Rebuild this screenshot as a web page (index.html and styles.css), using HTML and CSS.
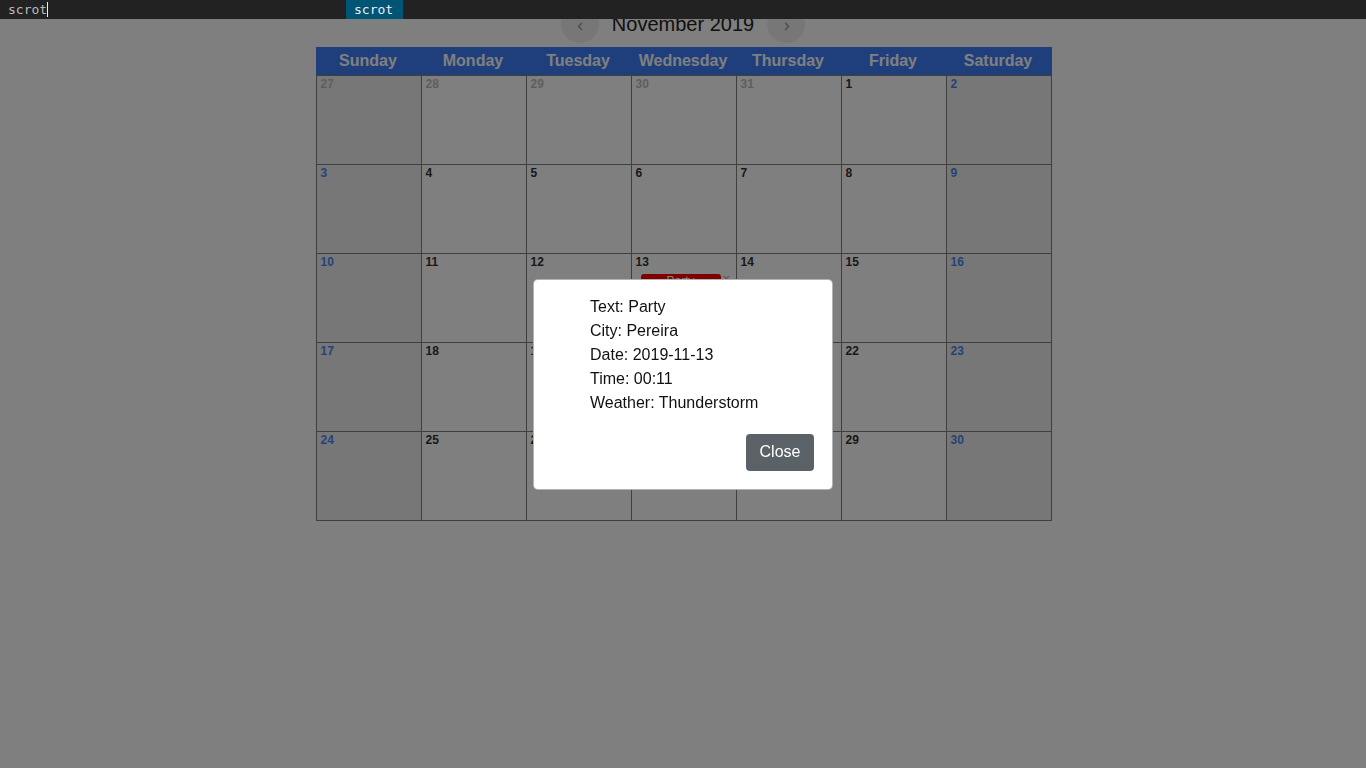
FILE: index.html
```html
<!DOCTYPE html>
<html>
<head>
<meta charset="utf-8">
<link rel="stylesheet" href="styles.css">
</head>
<body>
<div class="page">
  <div class="nav">
    <button class="nav-btn">&lsaquo;</button>
    <div class="title">November 2019</div>
    <button class="nav-btn">&rsaquo;</button>
  </div>
  <div class="calendar">
    <div class="weekdays">
      <div>Sunday</div><div>Monday</div><div>Tuesday</div><div>Wednesday</div><div>Thursday</div><div>Friday</div><div>Saturday</div>
    </div>
    <div class="days">
      <div class="day weekend other"><span class="num">27</span></div>
      <div class="day other"><span class="num">28</span></div>
      <div class="day other"><span class="num">29</span></div>
      <div class="day other"><span class="num">30</span></div>
      <div class="day other"><span class="num">31</span></div>
      <div class="day"><span class="num">1</span></div>
      <div class="day weekend"><span class="num">2</span></div>

      <div class="day weekend"><span class="num">3</span></div>
      <div class="day"><span class="num">4</span></div>
      <div class="day"><span class="num">5</span></div>
      <div class="day"><span class="num">6</span></div>
      <div class="day"><span class="num">7</span></div>
      <div class="day"><span class="num">8</span></div>
      <div class="day weekend"><span class="num">9</span></div>

      <div class="day weekend"><span class="num">10</span></div>
      <div class="day"><span class="num">11</span></div>
      <div class="day"><span class="num">12</span></div>
      <div class="day"><span class="num">13</span>
        <div class="event"><span class="event-label">Party</span><span class="event-x">&times;</span></div>
      </div>
      <div class="day"><span class="num">14</span></div>
      <div class="day"><span class="num">15</span></div>
      <div class="day weekend"><span class="num">16</span></div>

      <div class="day weekend"><span class="num">17</span></div>
      <div class="day"><span class="num">18</span></div>
      <div class="day"><span class="num">19</span></div>
      <div class="day"><span class="num">20</span></div>
      <div class="day"><span class="num">21</span></div>
      <div class="day"><span class="num">22</span></div>
      <div class="day weekend"><span class="num">23</span></div>

      <div class="day weekend"><span class="num">24</span></div>
      <div class="day"><span class="num">25</span></div>
      <div class="day"><span class="num">26</span></div>
      <div class="day"><span class="num">27</span></div>
      <div class="day"><span class="num">28</span></div>
      <div class="day"><span class="num">29</span></div>
      <div class="day weekend"><span class="num">30</span></div>
    </div>
  </div>
</div>

<div class="backdrop"></div>

<div class="modal">
  <div class="modal-body">
    <ul class="details">
      <li>Text: Party</li>
      <li>City: Pereira</li>
      <li>Date: 2019-11-13</li>
      <li>Time: 00:11</li>
      <li>Weather: Thunderstorm</li>
    </ul>
  </div>
  <div class="modal-footer">
    <button class="btn-close">Close</button>
  </div>
</div>

<div class="dmenu">
  <span class="prompt">scrot<span class="cursor"></span></span>
  <span class="item-sel">scrot</span>
</div>
</body>
</html>
```

FILE: styles.css
```css
html, body {
  margin: 0;
  padding: 0;
  background: #fff;
  font-family: "Liberation Sans", Arial, sans-serif;
  color: #212529;
}

.page {
  display: flex;
  flex-direction: column;
  align-items: center;
}

.nav {
  display: flex;
  align-items: center;
  justify-content: center;
  gap: 13px;
  padding-top: 5px;
  height: 38px;
  margin-bottom: 4px;
}

.nav-btn {
  width: 38px;
  height: 38px;
  border-radius: 50%;
  border: none;
  background: #eeeeee;
  color: #999;
  font-size: 18px;
  font-family: "Liberation Sans", Arial, sans-serif;
  padding: 2px 0 0 1px;
  display: flex;
  align-items: center;
  justify-content: center;
}

.title {
  font-size: 20px;
  line-height: 24px;
  color: #222;
  white-space: nowrap;
}

.calendar {
  width: 736px;
  margin-left: 1px;
}

.weekdays {
  display: grid;
  grid-template-columns: repeat(7, 105px);
  background: #3f7ef8;
  height: 28px;
  align-items: center;
}

.weekdays div {
  text-align: center;
  color: #fff;
  font-weight: bold;
  font-size: 16px;
  padding-bottom: 1px;
}

.days {
  display: grid;
  grid-template-columns: repeat(7, 105px);
  grid-auto-rows: 89px;
  border-left: 1px solid #7f7f7f;
  border-top: 1px solid #7f7f7f;
}

.day {
  border-right: 1px solid #7f7f7f;
  border-bottom: 1px solid #7f7f7f;
  padding: 1px 4px;
  background: #fff;
  display: flex;
  flex-direction: column;
  align-items: flex-start;
}

.day.weekend {
  background: #eeeeee;
}

.num {
  font-size: 12px;
  font-weight: bold;
  line-height: 14px;
  color: #333;
}

.weekend .num {
  color: #4a86f0;
}

.other .num,
.weekend.other .num {
  color: #bdbdbd;
}

.event {
  display: flex;
  align-items: flex-start;
  margin-top: 5px;
  margin-left: 5px;
}

.event-label {
  width: 80px;
  height: 15px;
  background: #ff0000;
  color: #fff;
  border-radius: 3px;
  font-size: 12px;
  text-align: center;
  line-height: 15px;
}

.event-x {
  color: #aaa;
  font-size: 13px;
  margin-left: 2px;
  line-height: 13px;
  margin-top: -2px;
}

.backdrop {
  position: fixed;
  inset: 0;
  background: rgba(0, 0, 0, 0.5);
}

.modal {
  position: fixed;
  left: 533px;
  top: 279px;
  width: 298px;
  background: #fff;
  border: 1px solid rgba(0, 0, 0, 0.3);
  border-radius: 5px;
}

.modal-body {
  padding: 15px 15px 0 16px;
}

.details {
  list-style: none;
  margin: 0;
  padding-left: 40px;
  font-size: 16px;
  line-height: 24px;
  color: #111;
}

.modal-footer {
  display: flex;
  justify-content: flex-end;
  padding: 19px 18px 18px;
}

.btn-close {
  height: 37px;
  width: 68px;
  background: #5a6268;
  color: #fff;
  border: none;
  border-radius: 4px;
  font-family: "Liberation Sans", Arial, sans-serif;
  font-size: 16px;
  padding: 0 0 1px;
}

.dmenu {
  position: fixed;
  top: 0;
  left: 0;
  right: 0;
  height: 19px;
  background: #222222;
  font-family: "DejaVu Sans Mono", monospace;
  font-size: 13px;
  line-height: 19px;
  color: #bbbbbb;
  display: flex;
}

.prompt {
  padding-left: 8px;
  width: 338px;
  display: flex;
  align-items: center;
}

.cursor {
  display: inline-block;
  width: 1px;
  height: 15px;
  background: #eeeeee;
}

.item-sel {
  background: #005577;
  color: #eeeeee;
  padding: 0 10px 0 8px;
}
```
